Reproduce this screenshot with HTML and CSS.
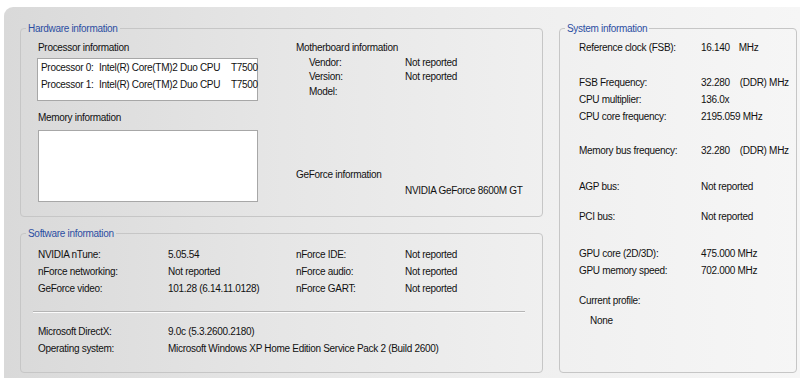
FILE: index.html
```html
<!DOCTYPE html>
<html>
<head>
<meta charset="utf-8">
<link rel="stylesheet" href="styles.css">
</head>
<body>
<div class="panel">
  <div class="leftcol">
    <fieldset class="box hw">
      <legend>Hardware information</legend>
      <div class="hw-grid">
        <div class="hw-left">
          <div class="title">Processor information</div>
          <div class="listbox">
            <div class="proc"><span class="pn">Processor 0:</span><span class="pc">Intel(R) Core(TM)2 Duo CPU</span><span>T7500</span></div>
            <div class="proc"><span class="pn">Processor 1:</span><span class="pc">Intel(R) Core(TM)2 Duo CPU</span><span>T7500</span></div>
          </div>
          <div class="title mem-title">Memory information</div>
          <div class="membox"></div>
        </div>
        <div class="hw-right">
          <div class="title mb-title">Motherboard information</div>
          <div class="mb-rows">
            <div class="mb-row"><span class="mb-l">Vendor:</span><span>Not reported</span></div>
            <div class="mb-row"><span class="mb-l">Version:</span><span>Not reported</span></div>
            <div class="mb-row"><span class="mb-l">Model:</span><span></span></div>
          </div>
          <div class="title gf-title">GeForce information</div>
          <div class="gf-val">NVIDIA GeForce 8600M GT</div>
        </div>
      </div>
    </fieldset>
    <fieldset class="box sw">
      <legend>Software information</legend>
      <div class="sw-grid">
        <span>NVIDIA nTune:</span><span>5.05.54</span><span>nForce IDE:</span><span>Not reported</span>
        <span>nForce networking:</span><span>Not reported</span><span>nForce audio:</span><span>Not reported</span>
        <span>GeForce video:</span><span>101.28 (6.14.11.0128)</span><span>nForce GART:</span><span>Not reported</span>
      </div>
      <div class="sep"></div>
      <div class="sw-lower">
        <span>Microsoft DirectX:</span><span>9.0c (5.3.2600.2180)</span>
        <span>Operating system:</span><span>Microsoft Windows XP Home Edition Service Pack 2 (Build 2600)</span>
      </div>
    </fieldset>
  </div>
  <fieldset class="box sys">
    <legend>System information</legend>
    <div class="sys-rows">
      <div class="srow"><span class="sl">Reference clock (FSB):</span><span>16.140<span class="gap2">MHz</span></span></div>
      <div class="srow g18"><span class="sl">FSB Frequency:</span><span>32.280<span class="gap3">(DDR) MHz</span></span></div>
      <div class="srow"><span class="sl">CPU multiplier:</span><span>136.0x</span></div>
      <div class="srow"><span class="sl">CPU core frequency:</span><span>2195.059 MHz</span></div>
      <div class="srow g17"><span class="sl">Memory bus frequency:</span><span>32.280<span class="gap3">(DDR) MHz</span></span></div>
      <div class="srow g19"><span class="sl">AGP bus:</span><span>Not reported</span></div>
      <div class="srow g13"><span class="sl">PCI bus:</span><span>Not reported</span></div>
      <div class="srow g20"><span class="sl">GPU core (2D/3D):</span><span>475.000 MHz</span></div>
      <div class="srow"><span class="sl">GPU memory speed:</span><span>702.000 MHz</span></div>
      <div class="srow g13"><span class="sl">Current profile:</span></div>
      <div class="srow g3 none"><span>None</span></div>
    </div>
  </fieldset>
</div>
</body>
</html>
```
FILE: styles.css
```css
* { box-sizing: border-box; }
html, body { margin: 0; padding: 0; }
body {
  background: #ffffff;
  font-family: "Liberation Sans", Arial, sans-serif;
  font-size: 10px;
  letter-spacing: -0.3px;
  color: #111111;
  width: 800px;
  height: 378px;
  overflow: hidden;
}
.panel {
  margin: 7px 0 0 4px;
  height: 371px;
  border-radius: 9px 0 0 0;
  background: linear-gradient(to right, #d9d9d9 0%, #e6e6e6 35%, #efefef 65%, #f6f6f6 100%);
  padding: 15px 0 0 16px;
  display: flex;
  gap: 16px;
}
.leftcol {
  width: 523px;
  display: flex;
  flex-direction: column;
  gap: 10px;
}
.box {
  margin: 0;
  padding: 0;
  min-width: 0;
  border: 1px solid #c6c6c6;
  border-radius: 4px;
}
.box legend {
  margin-left: 5px;
  padding: 0 2px;
  line-height: 13px;
  color: #2c4ea2;
}
.hw { height: 195px; }
.sw { height: 146px; }
.sys { width: 238px; height: 351px; }

.title { line-height: 13px; }
.hw-grid {
  display: grid;
  grid-template-columns: 259px 1fr;
  padding: 6px 0 0 16px;
}
.hw-left .title { margin-left: 1px; }
.listbox {
  margin-top: 4px;
  width: 221px;
  height: 43px;
  background: #fff;
  border: 1px solid #a7a7a7;
  padding: 0 0 0 3px;
}
.proc {
  display: grid;
  grid-template-columns: 58px 132px auto;
  line-height: 17px;
}
.mem-title { margin-top: 10px; }
.membox {
  margin-top: 6px;
  margin-left: 1px;
  width: 220px;
  height: 72px;
  background: #fff;
  border: 1px solid #a7a7a7;
}
.mb-rows { margin-top: 1.5px; padding-left: 13px; }
.mb-row {
  display: grid;
  grid-template-columns: 96px auto;
  line-height: 14.5px;
}
.gf-title { margin-top: 68.5px; }
.gf-val { margin-top: 3px; margin-left: 109px; line-height: 13px; }

.sw-grid {
  display: grid;
  grid-template-columns: 130px 128px 109px auto;
  line-height: 17px;
  padding: 5.5px 0 0 17px;
}
.sep {
  margin: 14px 17px 0 12px;
  height: 2px;
  border-top: 1px solid #b5b5b5;
  border-bottom: 1px solid #fbfbfb;
}
.sw-lower {
  display: grid;
  grid-template-columns: 130px auto;
  line-height: 17px;
  padding: 10.5px 0 0 17px;
}

.sys-rows { padding: 3.5px 0 0 19px; }
.srow {
  display: grid;
  grid-template-columns: 122px auto;
  line-height: 17px;
  white-space: nowrap;
}
.gap2 { margin-left: 9px; }
.gap3 { margin-left: 10px; }
.g3 { margin-top: 3px; }
.g13 { margin-top: 13px; }
.g17 { margin-top: 17px; }
.g18 { margin-top: 18px; }
.g19 { margin-top: 19px; }
.g20 { margin-top: 20px; }
.none { padding-left: 11px; }
```
